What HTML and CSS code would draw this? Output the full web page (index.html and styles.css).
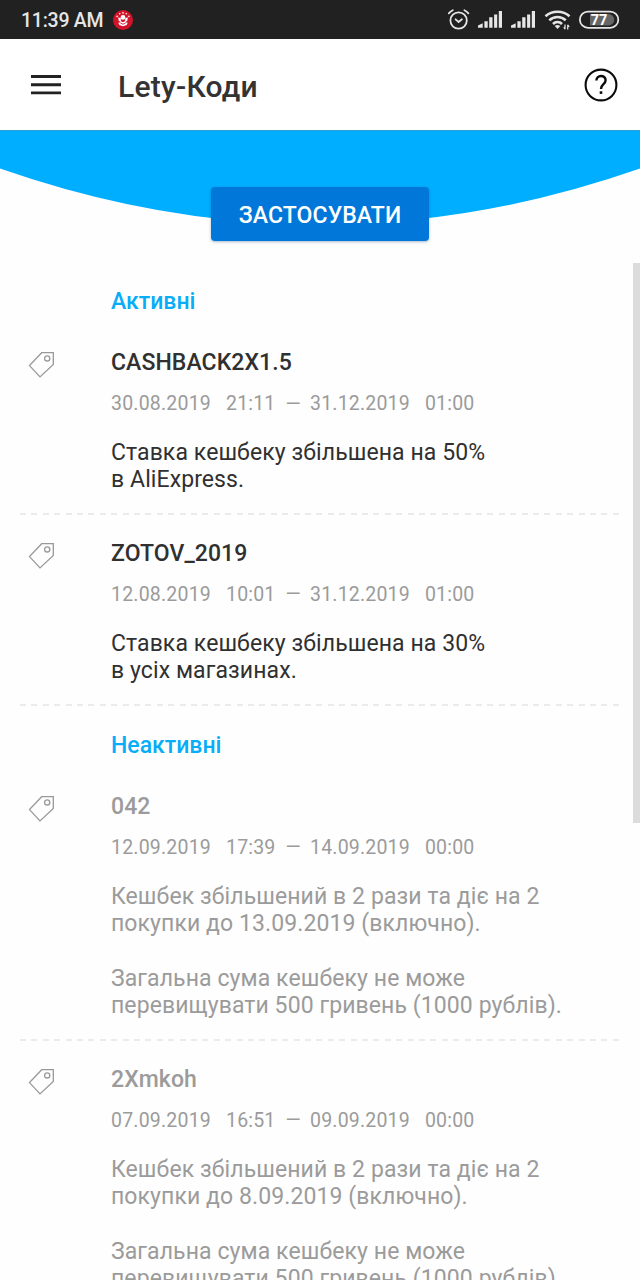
FILE: index.html
```
<!DOCTYPE html>
<html lang="uk">
<head>
<meta charset="utf-8">
<title>Lety-Коди</title>
<link rel="stylesheet" href="styles.css">
</head>
<body>
<svg width="0" height="0" class="defs">
  <symbol id="tag" viewBox="0 0 28 28"><path d="M13.7 1.7H25.3V13.4L12 25.9 1.5 14.6Z"/><circle cx="19.2" cy="7.4" r="2.6"/></symbol>
</svg>
<div class="status">
  <span class="clock">11:39 AM</span>
  <svg class="notif" width="20" height="20" viewBox="0 0 20 20"><circle cx="10" cy="10" r="10" fill="#d3132a"/><g fill="#fff"><circle cx="10" cy="7.4" r="2.4"/><path d="M5.2 7.2 8 8.5l-.3 2L10 12l2.300-1.500-.3-2 2.800-1.300-.5 3.600-2.300 1.400 2.700.5-1 2.200L10 16.300l-3.700-1.400-1-2.200 2.700-.5-2.300-1.400z"/><circle cx="4.100" cy="6.400" r=".8"/><circle cx="6.700" cy="3.800" r=".8"/><circle cx="10" cy="2.900" r=".8"/><circle cx="13.300" cy="3.800" r=".8"/><circle cx="15.900" cy="6.400" r=".8"/></g><path d="M8 10.600l2 1.200 2-1.200M7.500 13.200l2.500 1 2.500-1" stroke="#d3132a" stroke-width=".9" fill="none"/></svg>
  <svg class="indicators" width="176" height="24" viewBox="446 8 176 24">
    <g fill="none" stroke="#e6e6e6" stroke-width="1.800" stroke-linecap="round">
      <circle cx="458.600" cy="20.500" r="8.200"/>
      <path d="M448.800 13.400a12 12 0 0 1 4-3.200M468.400 13.400a12 12 0 0 0-4-3.200M455.600 19.300l3 2.700 3.300-2.700"/>
    </g>
    <g id="signal" fill="#e6e6e6"><path d="M478 27.800v-2.200l4.700-2.300v4.500zM484.400 27.800v-6.500h3.300v6.500zM489.200 27.800V17.300h3.300v10.500zM494.100 27.800V14.600h3.100v13.200zM498.800 27.800V10.900h3.200v16.900z"/></g>
    <use href="#signal" x="33"/>
    <g fill="none" stroke="#e6e6e6" stroke-width="2.600">
      <path d="M545.500 16.300c6.500-6 17.500-6 24 0M549.300 20.400c4.700-4.500 11.700-4.500 16.400 0M553 24c2.500-2.600 6.500-2.600 9 0"/>
    </g>
    <path d="M554.700 26.100q2.800-2.200 5.600 0l-2.800 2.900z" fill="#e6e6e6"/>
    <path d="M565 24.500v4.800M567.700 24.700v4.800M563.800 27.200l1.200 1.900M567.700 24.900l1.500 1.900" stroke="#e6e6e6" stroke-width="1.200" fill="none"/>
    <rect x="579.900" y="11.600" width="38.400" height="16.200" rx="8.100" fill="none" stroke="#e6e6e6" stroke-width="1.800"/>
    <path d="M590 14h18.500a5.700 5.700 0 0 1 0 11.400H590z" fill="#666"/>
    <text x="599" y="24.500" class="battery">77</text>
  </svg>
</div>
<header class="bar">
  <svg width="30" height="20" viewBox="0 0 30 20"><path d="M0 1.500h30M0 9.700h30M0 17.900h30" stroke="#222" stroke-width="2.900"/></svg>
  <h1>Lety-Коди</h1>
  <svg width="34" height="34" viewBox="0 0 34 34" fill="none" stroke="#0b0b0b"><circle cx="17" cy="17" r="15.400" stroke-width="2.100"/><path d="M12.400 12.600c0-6.200 9.200-6.100 9.200-.3 0 4-4.600 3.900-4.600 8.700" stroke-width="2.400"/><path d="M17 23.300v2.600" stroke-width="2.600"/></svg>
</header>
<section class="hero">
  <svg class="arc" width="640" height="100" viewBox="0 0 640 100"><path d="M0 0H640V38.500Q320 150.500 0 38.500Z" fill="#00aeff"/><path d="M0 .5H640" stroke="#2a9fd8"/></svg>
  <button class="apply">ЗАСТОСУВАТИ</button>
</section>
<main class="list">
  <h2>Активні</h2>
  <article class="code">
    <svg class="tag"><use href="#tag"/></svg>
    <div class="info"><h3>CASHBACK2X1.5</h3>
      <p class="dates"><span>30.08.2019</span><span>21:11</span><span class="dash">—</span><span>31.12.2019</span><span>01:00</span></p>
      <p class="desc">Ставка кешбеку збільшена на 50%<br>в AliExpress.</p></div>
  </article>
  <article class="code">
    <svg class="tag"><use href="#tag"/></svg>
    <div class="info"><h3>ZOTOV_2019</h3>
      <p class="dates"><span>12.08.2019</span><span>10:01</span><span class="dash">—</span><span>31.12.2019</span><span>01:00</span></p>
      <p class="desc">Ставка кешбеку збільшена на 30%<br>в усіх магазинах.</p></div>
  </article>
  <h2>Неактивні</h2>
  <article class="code inactive">
    <svg class="tag"><use href="#tag"/></svg>
    <div class="info"><h3>042</h3>
      <p class="dates"><span>12.09.2019</span><span>17:39</span><span class="dash">—</span><span>14.09.2019</span><span>00:00</span></p>
      <p class="desc">Кешбек збільшений в 2 рази та діє на 2<br>покупки до 13.09.2019 (включно).<br><br>Загальна сума кешбеку не може<br>перевищувати 500 гривень (1000 рублів).</p></div>
  </article>
  <article class="code inactive">
    <svg class="tag"><use href="#tag"/></svg>
    <div class="info"><h3>2Xmkoh</h3>
      <p class="dates"><span>07.09.2019</span><span>16:51</span><span class="dash">—</span><span>09.09.2019</span><span>00:00</span></p>
      <p class="desc">Кешбек збільшений в 2 рази та діє на 2<br>покупки до 8.09.2019 (включно).<br><br>Загальна сума кешбеку не може<br>перевищувати 500 гривень (1000 рублів).</p></div>
  </article>
  <div class="scrollbar"></div>
</main>
</body>
</html>
```
FILE: styles.css
```
* { box-sizing: border-box; }
body { margin: 0; width: 640px; height: 1280px; overflow: hidden; display: flex; flex-direction: column; background: #fefefe; font-family: Roboto, "Liberation Sans", sans-serif; color: #303030; }
h1, h2, h3, p { margin: 0; font-weight: 500; white-space: nowrap; }
.defs { position: absolute; }
.status { flex: none; height: 39px; background: #212121; display: flex; align-items: center; padding: 0 18px 0 21px; }
.clock { width: 82px; padding-top: 1px; color: #e6e6e6; font-size: 19.5px; font-weight: 500; letter-spacing: -.25px; white-space: nowrap; }
.notif { margin-left: 10px; }
.indicators { margin-left: auto; }
.battery { font: 700 14.5px Roboto, sans-serif; fill: #fff; text-anchor: middle; }
.bar { flex: none; height: 91px; background: #fff; display: flex; align-items: center; padding: 0 22px 0 31px; }
.bar h1 { margin: 4px auto 0 57px; font-size: 30px; line-height: 36px; letter-spacing: .25px; color: #333; }
.hero { flex: none; height: 132px; position: relative; display: flex; justify-content: center; align-items: flex-start; padding-top: 57px; }
.arc { position: absolute; top: 0; left: 0; }
.apply { position: relative; width: 218px; height: 54px; border: 0; border-radius: 4px; background: #0077d9; color: #fff; font: 500 23px Roboto, sans-serif; letter-spacing: .1px; padding: 2px 0 0; box-shadow: 0 1px 3px rgba(0, 60, 110, .35); }
.list { flex: 1; min-height: 0; position: relative; overflow: hidden; padding-top: 26px; }
.list h2 { margin: 0 0 34px 111px; font-size: 23px; line-height: 27px; color: #08adf8; }
.code + h2 { padding-top: 1.1px; }
.code { display: flex; margin: 0 21px 25px 20px; padding: 0 0 21.3px 8px; background: repeating-linear-gradient(90deg, #ebebeb 0 6px, transparent 6px 11.4px) bottom / 100% 2px no-repeat; }
.tag { width: 28px; height: 28px; margin: 2px 55px 0 0; fill: none; stroke: #999; stroke-width: 1.3; }
.info h3 { font-size: 23px; line-height: 27px; letter-spacing: .08px; }
.dates { display: flex; height: 23px; margin-top: 16px; font-size: 19.5px; line-height: 23px; font-weight: 400; letter-spacing: .2px; color: #9b9b9b; }
.dates span { margin-right: 15px; }
.dates span:nth-child(2) { margin-right: 10px; }
.dates .dash { margin-right: 9px; padding-top: .6px; }
.desc { margin-top: 24px; font-size: 23px; line-height: 27.3px; font-weight: 400; letter-spacing: .09px; }
.inactive .desc, .inactive h3 { color: #9b9b9b; }
.scrollbar { position: absolute; top: 1px; right: 0; width: 7px; height: 560px; background: #dcdcdc; }
```
